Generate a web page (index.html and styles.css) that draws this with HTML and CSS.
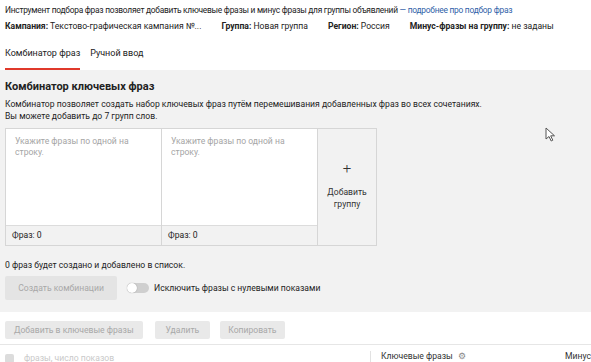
FILE: index.html
```html
<!DOCTYPE html>
<html lang="ru">
<head>
  <meta charset="UTF-8" />
  <meta name="viewport" content="width=device-width, initial-scale=1" />
  <title>Подбор фраз</title>
  <link rel="stylesheet" href="styles.css">
</head>
<body>
  <div class="intro">
    Инструмент подбора фраз позволяет добавить ключевые фразы и минус фразы для группы объявлений
    <a href="#">— подробнее про подбор фраз</a>
  </div>
  <div class="meta">
    <span><b>Кампания:</b> Текстово-графическая кампания №...</span>
    <span><b>Группа:</b> Новая группа</span>
    <span><b>Регион:</b> Россия</span>
    <span><b>Минус-фразы на группу:</b> не заданы</span>
  </div>
  <nav class="tabs">
    <div class="tab active">Комбинатор фраз</div>
    <div class="tab">Ручной ввод</div>
  </nav>

  <section class="combinator">
    <h2>Комбинатор ключевых фраз</h2>
    <p class="desc">Комбинатор позволяет создать набор ключевых фраз путём перемешивания добавленных фраз во всех сочетаниях.<br>Вы можете добавить до 7 групп слов.</p>
    <div class="groups">
      <div class="group">
        <div class="group-input">Укажите фразы по одной на строку.</div>
        <div class="group-foot">Фраз: 0</div>
      </div>
      <div class="group">
        <div class="group-input">Укажите фразы по одной на строку.</div>
        <div class="group-foot">Фраз: 0</div>
      </div>
      <div class="add-group">
        <span class="plus">+</span>
        <span>Добавить<br>группу</span>
      </div>
    </div>
    <p class="count">0 фраз будет создано и добавлено в список.</p>
    <div class="actions">
      <button class="btn big">Создать комбинации</button>
      <span class="toggle"></span>
      <span class="toggle-label">Исключить фразы с нулевыми показами</span>
    </div>
    <svg class="cursor" width="12" height="16" viewBox="0 0 12 16">
      <path d="M1 1 L1 12 L4 9.5 L6.2 14 L7.8 13.2 L5.7 8.8 L9.5 8.8 Z" fill="#fff" stroke="#555" stroke-width="1"/>
    </svg>
  </section>

  <div class="toolbar">
    <button class="btn">Добавить в ключевые фразы</button>
    <button class="btn">Удалить</button>
    <button class="btn">Копировать</button>
  </div>

  <div class="table-head">
    <div class="col-left">
      <span class="check"></span>
      <span class="faint">фразы, число показов</span>
    </div>
    <div class="col-right">
      <span>Ключевые фразы <span class="gear">⚙</span></span>
      <span>Минус</span>
    </div>
  </div>
</body>
</html>
```

FILE: styles.css
```css
* {
  box-sizing: border-box;
}
body {
  margin: 0;
  font-family: Roboto, 'Open Sans', sans-serif;
  font-size: 8.6px;
  color: #222;
  background: #fff;
  height: 362px;
  overflow: hidden;
}

.intro {
  padding: 4px 5px 0;
  height: 20px;
  font-size: 8.4px;
  letter-spacing: -0.25px;
  line-height: 12px;
  white-space: nowrap;
}
.intro a {
  color: #2f5fa8;
  text-decoration: none;
}

.meta {
  display: flex;
  gap: 20px;
  padding: 0 5px;
  height: 18px;
  line-height: 12px;
  white-space: nowrap;
}
.meta b {
  font-weight: 700;
}

.tabs {
  display: flex;
  gap: 10px;
  padding: 0 5px;
  height: 32px;
}
.tab {
  padding-top: 10px;
  font-size: 9px;
}
.tab.active {
  border-bottom: 2px solid #e0392b;
}

.combinator {
  position: relative;
  background: #f2f2f2;
  padding: 10px 5px 0;
  height: 242px;
}
.combinator h2 {
  margin: 0;
  font-size: 11px;
  font-weight: 700;
  line-height: 14px;
}
.desc {
  margin: 4px 0 0;
  line-height: 12px;
}

.groups {
  display: flex;
  width: 372px;
  height: 118px;
  margin-top: 6px;
  border: 1px solid #d6d6d6;
}
.group {
  flex: 0 0 156px;
  display: flex;
  flex-direction: column;
  border-right: 1px solid #d6d6d6;
}
.group-input {
  flex: 1;
  background: #fff;
  color: #a5a5a5;
  padding: 7px 9px;
  line-height: 11px;
  border-bottom: 1px solid #dcdcdc;
}
.group-foot {
  height: 19px;
  padding: 4px 6px;
  background: #f2f2f2;
}
.add-group {
  flex: 1;
  display: flex;
  flex-direction: column;
  align-items: center;
  justify-content: center;
  text-align: center;
  line-height: 12px;
  color: #333;
  padding-bottom: 2px;
}
.plus {
  font-size: 15px;
  font-weight: 300;
  margin-bottom: 12px;
}

.count {
  margin: 13px 0 0;
  line-height: 12px;
}

.actions {
  display: flex;
  align-items: center;
  margin-top: 5px;
}
.btn {
  font-family: inherit;
  font-size: 8.6px;
  color: #a8a8a8;
  background: #e9e9e9;
  border: none;
  border-radius: 2px;
  height: 18px;
  padding: 0 11px;
}
.btn.big {
  height: 24px;
  width: 112px;
  background: #e4e4e4;
}
.toggle {
  position: relative;
  width: 22px;
  height: 10px;
  border-radius: 5px;
  background: #cfcfcf;
  margin: 0 5px 0 10px;
}
.toggle::before {
  content: '';
  position: absolute;
  left: 0;
  top: 0;
  width: 10px;
  height: 10px;
  border-radius: 50%;
  background: #fff;
  box-shadow: 0 0 1px rgba(0, 0, 0, 0.4);
}
.toggle-label {
  color: #222;
}

.cursor {
  position: absolute;
  left: 545px;
  top: 57px;
}

.toolbar {
  display: flex;
  gap: 10px;
  padding: 9px 5px 0;
  height: 33px;
  border-bottom: 1px solid #e6e6e6;
}
.toolbar .btn:first-child {
  padding: 0 9px;
  margin-right: 2px;
}
.toolbar .btn:last-child {
  padding: 0 8px;
}

.table-head {
  display: flex;
  height: 20px;
  padding-top: 6px;
}
.col-left {
  display: flex;
  align-items: center;
  gap: 10px;
  width: 371px;
  padding-left: 5px;
  border-right: 1px solid #e2e2e2;
}
.check {
  width: 9px;
  height: 9px;
  border-radius: 2px;
  background: #dcdcdc;
}
.faint {
  color: #c9c9c9;
}
.col-right {
  flex: 1;
  display: flex;
  justify-content: space-between;
  padding-left: 10px;
  color: #333;
}
.gear {
  color: #888;
  margin-left: 3px;
}
```
